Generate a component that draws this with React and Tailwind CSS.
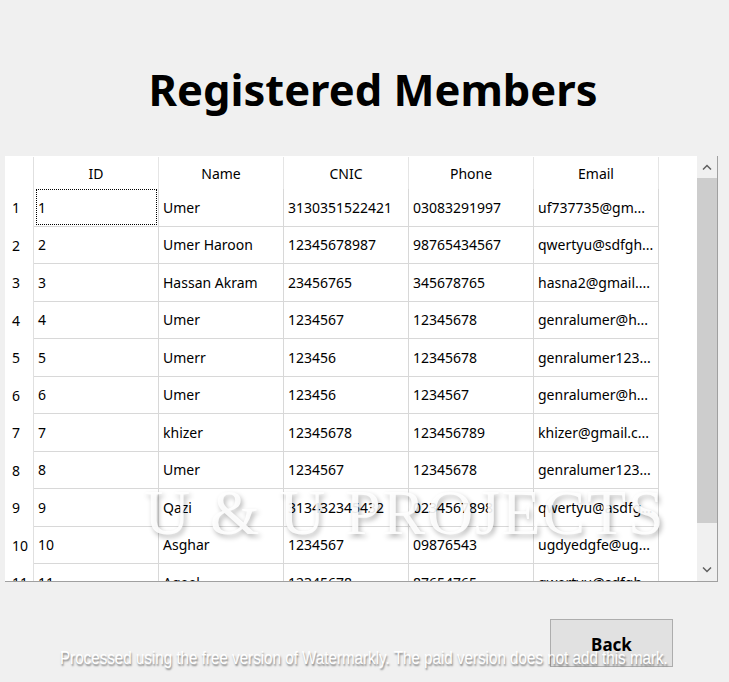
import React from "react";

const members = [
  { id: 1, name: "Umer", cnic: "3130351522421", phone: "03083291997", email: "uf737735@gm..." },
  { id: 2, name: "Umer Haroon", cnic: "12345678987", phone: "98765434567", email: "qwertyu@sdfgh..." },
  { id: 3, name: "Hassan Akram", cnic: "23456765", phone: "345678765", email: "hasna2@gmail...." },
  { id: 4, name: "Umer", cnic: "1234567", phone: "12345678", email: "genralumer@h..." },
  { id: 5, name: "Umerr", cnic: "123456", phone: "12345678", email: "genralumer123..." },
  { id: 6, name: "Umer", cnic: "123456", phone: "1234567", email: "genralumer@h..." },
  { id: 7, name: "khizer", cnic: "12345678", phone: "123456789", email: "khizer@gmail.c..." },
  { id: 8, name: "Umer", cnic: "1234567", phone: "12345678", email: "genralumer123..." },
  { id: 9, name: "Qazi", cnic: "313432345432", phone: "0234567898", email: "qwertyu@asdfg..." },
  { id: 10, name: "Asghar", cnic: "1234567", phone: "09876543", email: "ugdyedgfe@ug..." },
  { id: 11, name: "Aqeel", cnic: "12345678", phone: "87654765", email: "qwertyu@sdfgh..." },
];

const columns = ["ID", "Name", "CNIC", "Phone", "Email"];

const App = () => {
  return (
    <div
      className="relative w-[729px] h-[682px] bg-[#f0f0f0] overflow-hidden text-black"
      style={{ fontFamily: '"Noto Sans", "Open Sans", sans-serif' }}
    >
      {/* Title */}
      <div className="h-[156px] pt-[61px] flex justify-center">
        <h1 className="text-[43.5px] leading-[56px] font-bold pl-[17px]">Registered Members</h1>
      </div>

      {/* Table widget */}
      <div className="ml-[5px] w-[713px] h-[426px] flex bg-white border-r border-b border-[#a0a0a0]">
        <div className="w-[692px] overflow-hidden text-[14px]">
          {/* Header */}
          <div className="flex h-[33px] pt-[1px]">
            <div className="w-[29px] shrink-0 border-r border-[#e0e0e0]" />
            {columns.map((col) => (
              <div
                key={col}
                className="w-[125px] shrink-0 border-r border-[#e5e5e5] flex items-center justify-center"
              >
                {col}
              </div>
            ))}
          </div>

          {/* Rows */}
          {members.map((m, i) => (
            <div key={m.id} className="flex h-[37.5px]">
              <div className="w-[29px] shrink-0 border-r border-[#e0e0e0] flex items-center pl-[7px]">
                {m.id}
              </div>
              {[m.id, m.name, m.cnic, m.phone, m.email].map((val, j) => (
                <div
                  key={j}
                  className="w-[125px] shrink-0 border-r border-b border-[#d8d8d8] flex items-center pl-[4px] whitespace-nowrap overflow-hidden"
                >
                  {i === 0 && j === 0 ? (
                    <div className="w-[121px] h-[36px] -ml-[2px] border border-dotted border-black flex items-center pl-[1px]">
                      {val}
                    </div>
                  ) : (
                    val
                  )}
                </div>
              ))}
            </div>
          ))}
        </div>

        {/* Scrollbar */}
        <div className="w-[20px] flex flex-col bg-[#f0f0f0]">
          <div className="h-[22px] flex items-center justify-center">
            <svg width="10" height="6" viewBox="0 0 10 6">
              <path d="M1 5.5 L5 1.5 L9 5.5" fill="none" stroke="#606060" strokeWidth="1.5" />
            </svg>
          </div>
          <div className="h-[345px] bg-[#cdcdcd]" />
          <div className="flex-1" />
          <div className="h-[22px] flex items-center justify-center">
            <svg width="10" height="6" viewBox="0 0 10 6">
              <path d="M1 0.5 L5 4.5 L9 0.5" fill="none" stroke="#606060" strokeWidth="1.5" />
            </svg>
          </div>
        </div>
      </div>

      {/* Back button */}
      <div className="flex justify-end pr-[56px] mt-[37px]">
        <button className="w-[123px] h-[48px] pt-[3px] bg-[#e1e1e1] border border-[#adadad] text-[17px] font-bold">
          Back
        </button>
      </div>

      {/* Watermark over table */}
      <div
        className="absolute left-[144px] top-[481px] text-[64px] leading-none tracking-[1.8px] text-white/90 whitespace-nowrap pointer-events-none [text-shadow:2px_3px_5px_rgba(0,0,0,0.28)]"
        style={{ fontFamily: '"Liberation Serif", serif' }}
      >
        U &amp; U PROJECTS
      </div>

      {/* Footer watermark */}
      <div
        className="absolute left-[60px] top-[647px] text-[18px] leading-[22px] text-white whitespace-nowrap pointer-events-none origin-left scale-x-[0.843] [text-shadow:1px_2px_2px_rgba(0,0,0,0.45)]"
        style={{ fontFamily: '"Liberation Sans", sans-serif' }}
      >
        Processed using the free version of Watermarkly. The paid version does not add this mark.
      </div>
    </div>
  );
};

export default App;
